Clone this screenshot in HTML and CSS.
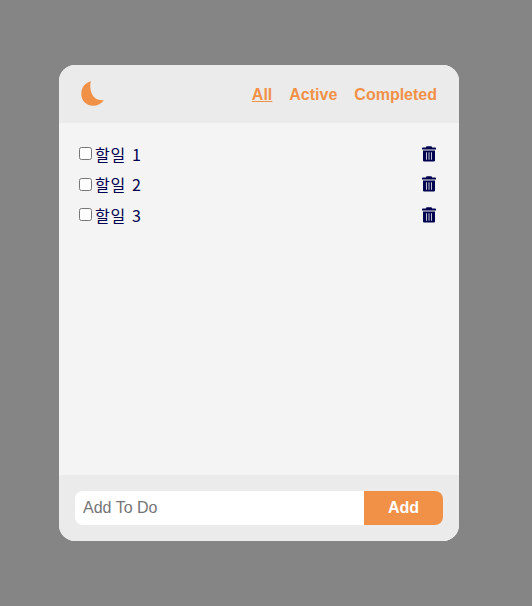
FILE: index.html
```html
<!DOCTYPE html>
<html lang="ko">
<head>
  <meta charset="UTF-8">
  <title>To Do</title>
  <link rel="stylesheet" href="styles.css">
</head>
<body>
  <div class="todo-card">
    <header class="todo-header">
      <button class="theme-btn" type="button" aria-label="theme">
        <svg class="moon" viewBox="0 0 24 26" width="24" height="26">
          <path d="M10 0.3 C4 1.5 0.3 7 0.3 13 C0.3 19.8 5.7 24.8 12 24.8 C16.5 24.8 20.5 22.8 23 19 C18 19.8 14 18 11.8 14.5 C9.6 11 8.5 5 10 0.3 Z"/>
        </svg>
      </button>
      <nav class="filters">
        <a class="filter active" href="#">All</a>
        <a class="filter" href="#">Active</a>
        <a class="filter" href="#">Completed</a>
      </nav>
    </header>
    <ul class="todo-list">
      <li class="todo-item">
        <label class="todo-label"><input type="checkbox"><span>할일 1</span></label>
        <button class="trash-btn" type="button" aria-label="delete">
          <svg viewBox="0 0 14 16" width="14" height="16"><path class="trash" fill-rule="evenodd" d="M5 0.2 H9 C9.6 0.2 9.9 0.6 10.2 1.4 H13.2 C13.7 1.4 14 1.8 14 2.2 V3.6 H0 V2.2 C0 1.8 0.3 1.4 0.8 1.4 H3.8 C4.1 0.6 4.4 0.2 5 0.2 Z M1 4.6 H13 V14.2 C13 15.1 12.4 15.6 11.6 15.6 H2.4 C1.6 15.6 1 15.1 1 14.2 Z M4 6.2 V13.8 H4.8 V6.2 Z M6.6 6.2 V13.8 H7.4 V6.2 Z M9.2 6.2 V13.8 H10 V6.2 Z"/></svg>
        </button>
      </li>
      <li class="todo-item">
        <label class="todo-label"><input type="checkbox"><span>할일 2</span></label>
        <button class="trash-btn" type="button" aria-label="delete">
          <svg viewBox="0 0 14 16" width="14" height="16"><path class="trash" fill-rule="evenodd" d="M5 0.2 H9 C9.6 0.2 9.9 0.6 10.2 1.4 H13.2 C13.7 1.4 14 1.8 14 2.2 V3.6 H0 V2.2 C0 1.8 0.3 1.4 0.8 1.4 H3.8 C4.1 0.6 4.4 0.2 5 0.2 Z M1 4.6 H13 V14.2 C13 15.1 12.4 15.6 11.6 15.6 H2.4 C1.6 15.6 1 15.1 1 14.2 Z M4 6.2 V13.8 H4.8 V6.2 Z M6.6 6.2 V13.8 H7.4 V6.2 Z M9.2 6.2 V13.8 H10 V6.2 Z"/></svg>
        </button>
      </li>
      <li class="todo-item">
        <label class="todo-label"><input type="checkbox"><span>할일 3</span></label>
        <button class="trash-btn" type="button" aria-label="delete">
          <svg viewBox="0 0 14 16" width="14" height="16"><path class="trash" fill-rule="evenodd" d="M5 0.2 H9 C9.6 0.2 9.9 0.6 10.2 1.4 H13.2 C13.7 1.4 14 1.8 14 2.2 V3.6 H0 V2.2 C0 1.8 0.3 1.4 0.8 1.4 H3.8 C4.1 0.6 4.4 0.2 5 0.2 Z M1 4.6 H13 V14.2 C13 15.1 12.4 15.6 11.6 15.6 H2.4 C1.6 15.6 1 15.1 1 14.2 Z M4 6.2 V13.8 H4.8 V6.2 Z M6.6 6.2 V13.8 H7.4 V6.2 Z M9.2 6.2 V13.8 H10 V6.2 Z"/></svg>
        </button>
      </li>
    </ul>
    <form class="todo-form">
      <input class="todo-input" type="text" placeholder="Add To Do">
      <button class="add-btn" type="button">Add</button>
    </form>
  </div>
</body>
</html>
```

FILE: styles.css
```css
html, body {
  height: 100%;
}
body {
  margin: 0;
  background: #858585;
  font-family: 'Liberation Sans', Arial, sans-serif;
  padding: 65px 0 0 59px;
  box-sizing: border-box;
  overflow: hidden;
}
.todo-card {
  width: 400px;
  height: 476px;
  border-radius: 16px;
  overflow: hidden;
  display: flex;
  flex-direction: column;
  background: #f4f4f4;
}
.todo-header {
  height: 58px;
  flex: none;
  display: flex;
  align-items: center;
  justify-content: space-between;
  padding: 0 22px;
  background: #ebebeb;
}
.theme-btn {
  background: none;
  border: none;
  padding: 0;
  display: flex;
}
.moon {
  fill: #f19148;
}
.filters {
  display: flex;
  gap: 17px;
  padding-top: 2px;
}
.filter {
  font-size: 16px;
  font-weight: bold;
  color: #f19148;
  text-decoration: none;
}
.filter.active {
  text-decoration: underline;
}
.todo-list {
  flex: 1;
  list-style: none;
  margin: 0;
  padding: 15.3px 23px 0 20px;
}
.todo-item {
  height: 30.5px;
  display: flex;
  align-items: center;
  justify-content: space-between;
}
.todo-label {
  display: flex;
  align-items: center;
  font-family: 'Noto Sans CJK KR', 'Noto Sans', sans-serif;
  font-size: 16px;
  font-weight: 400;
  letter-spacing: 0.7px;
  word-spacing: 1px;
  color: #00004f;
}
.todo-label input {
  width: 13px;
  height: 13px;
  margin: 0 3px 0 0;
}
.trash-btn {
  background: none;
  border: none;
  padding: 0;
  display: flex;
}
.trash {
  fill: #00004f;
}
.todo-form {
  height: 66px;
  flex: none;
  box-sizing: border-box;
  padding: 16px;
  display: flex;
  background: #ebebeb;
}
.todo-input {
  flex: 1;
  min-width: 0;
  border: none;
  outline: none;
  background: #fff;
  border-radius: 8px 0 0 8px;
  padding: 0 8px;
  font-family: inherit;
  font-size: 16px;
}
.todo-input::placeholder {
  color: #757575;
}
.add-btn {
  width: 79px;
  border: none;
  border-radius: 0 8px 8px 0;
  background: #f19148;
  color: #fff;
  font-family: inherit;
  font-size: 16px;
  font-weight: bold;
}
```
